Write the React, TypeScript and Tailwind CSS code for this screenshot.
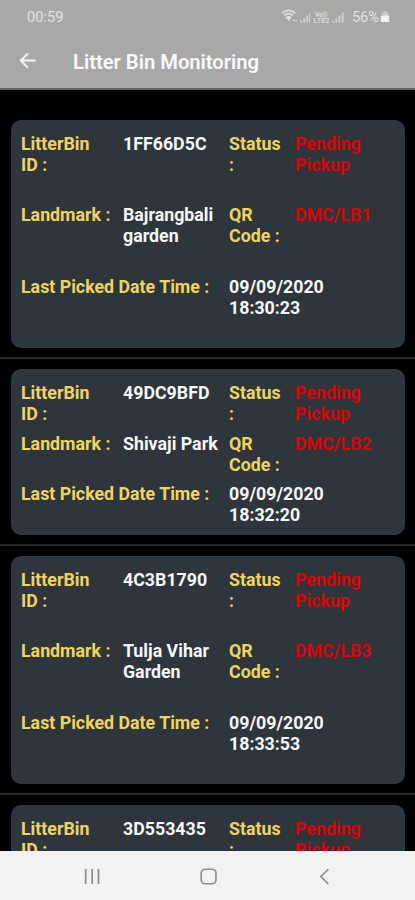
import type { ReactNode } from "react";
import { clsx } from "clsx";

type Bin = {
  id: string;
  status: string;
  tall: boolean;
  details?: {
    landmark: string;
    qrCode: string;
    pickedAt: string;
  };
};

const bins: Bin[] = [
  {
    id: "1FF66D5C",
    status: "Pending Pickup",
    tall: true,
    details: {
      landmark: "Bajrangbali garden",
      qrCode: "DMC/LB1",
      pickedAt: "09/09/2020 18:30:23",
    },
  },
  {
    id: "49DC9BFD",
    status: "Pending Pickup",
    tall: false,
    details: {
      landmark: "Shivaji Park",
      qrCode: "DMC/LB2",
      pickedAt: "09/09/2020 18:32:20",
    },
  },
  {
    id: "4C3B1790",
    status: "Pending Pickup",
    tall: true,
    details: {
      landmark: "Tulja Vihar Garden",
      qrCode: "DMC/LB3",
      pickedAt: "09/09/2020 18:33:53",
    },
  },
  {
    id: "3D553435",
    status: "Pending Pickup",
    tall: true,
  },
];

export default function App() {
  return (
    <div className="flex h-[900px] w-[415px] flex-col overflow-hidden bg-black font-['Roboto',sans-serif]">
      <header className="h-[90px] shrink-0 border-b-2 border-[#666] bg-[#a8a8a8]">
        <StatusBar />
        <div className="flex h-[54px] items-center pl-[18px]">
          <BackArrow />
          <h1 className="ml-[35px] pt-px text-[20.2px] leading-6 font-semibold text-[#fafafa]">
            Litter Bin Monitoring
          </h1>
        </div>
      </header>

      <main className="flex-1 overflow-hidden pt-[29.5px]">
        {bins.map((bin) => (
          <div
            key={bin.id}
            className="mb-[10px] border-b-2 border-[#262626] px-[10.5px] pb-[8.5px]"
          >
            <BinCard bin={bin} />
          </div>
        ))}
      </main>

      <NavigationBar />
    </div>
  );
}

function BinCard({ bin }: { bin: Bin }) {
  const row = clsx("flex", bin.tall ? "h-[71.4px]" : "h-[50.7px]");

  return (
    <section
      className={clsx(
        "rounded-[10px] bg-[#2e353b] pt-[13.6px] pl-[10.5px] text-[17.8px] leading-[21px] font-bold text-[#f5f7f8]",
        bin.tall ? "h-[228.5px]" : "h-[166.5px]"
      )}
    >
      <div className={row}>
        <Label className="w-[102px] pr-5">LitterBin ID :</Label>
        <div className="w-[106px]">{bin.id}</div>
        <Label className="w-[66px] pr-3">Status :</Label>
        <div className="w-[90px] text-[#d80508]">{bin.status}</div>
      </div>
      {bin.details && (
        <>
          <div className={row}>
            <Label className="w-[102px]">Landmark :</Label>
            <div className="w-[106px] pr-1">{bin.details.landmark}</div>
            <Label className="w-[66px] pr-3">QR Code :</Label>
            <div className="w-[90px] text-[#d80508]">{bin.details.qrCode}</div>
          </div>
          <div className={row}>
            <Label className="w-[208px]">Last Picked Date Time :</Label>
            <div className="w-[110px]">{bin.details.pickedAt}</div>
          </div>
        </>
      )}
    </section>
  );
}

function Label({
  children,
  className = "",
}: {
  children: ReactNode;
  className?: string;
}) {
  return (
    <div className={clsx("shrink-0 text-[#eed55f]", className)}>{children}</div>
  );
}

function StatusBar() {
  return (
    <div className="flex h-[34px] items-center justify-between pr-[25px] pl-[27px] text-[14.6px] text-[#e2e2e2]">
      <span className="pt-px">00:59</span>
      <div className="flex items-center">
        {/* Wifi, both SIM signals and the VoLTE badge */}
        <svg width="66" height="16" viewBox="0 0 66 16" fill="none">
          <path
            d="M0 4C4.1.6 9.1.6 13.2 4M2.3 6.4c2.6-2.2 6-2.2 8.6 0"
            stroke="#dedede"
            strokeWidth="1.7"
          />
          <path d="M3.5 8c2-1.5 4.4-1.5 6.4 0L6.7 12z" fill="#dedede" />
          <path d="m10 12 1.5-2 1.5 2zM13 11h2.5l-1.3 2z" fill="#d8d8d8" />
          <g fill="#d4d4d4">
            <path d="M18 11.5h2v2h-2zM21.2 9.5H23v4h-1.8zM24.3 6.5H26v7h-1.7zM27.1 4h1v9.5h-1z" />
            <path d="M50 11.5h2v2h-2zM53.3 9.5h1.8v4h-1.8zM56.5 6.5h2v7h-2zM59.8 3.5h1.8v10h-1.8z" />
          </g>
          <text x="33" y="7.5" fill="#dedede" fontSize="6.5" fontWeight="bold" textLength="12">
            Vo))
          </text>
          <text x="31.5" y="14" fill="#dedede" fontSize="7" fontWeight="bold" textLength="16">
            LTE2
          </text>
        </svg>
        <span className="ml-[4px] pt-px">56%</span>
        <svg className="ml-px" width="10" height="14" viewBox="0 0 10 14">
          <path d="M3.2 1h3.6v1.6h1.7V7h-7V2.6h1.7z" fill="#c4c4c4" />
          <path d="M.8 5.6h8.4v6.4H.8z" fill="#f1f1f1" />
        </svg>
      </div>
    </div>
  );
}

function BackArrow() {
  return (
    <svg width="20" height="20" viewBox="0 0 20 20" fill="none" aria-label="Back">
      <path
        d="M17.7 9.6H3.3M10 2.4 2.8 9.6l7.2 7.2"
        stroke="#f5f5f5"
        strokeWidth="2"
      />
    </svg>
  );
}

function NavigationBar() {
  return (
    <nav className="flex h-[49px] shrink-0 items-center bg-[#f2f2f2] text-[#8b8b8b]">
      <svg width="415" height="49" viewBox="0 0 415 49" fill="none" stroke="currentColor">
        <path d="M85.7 18v15M92.2 18v15M98.5 18v15" strokeWidth="1.7" />
        <rect x="201.2" y="18.2" width="14.8" height="14.6" rx="4" strokeWidth="1.6" />
        <path d="m328.3 18.2-7.5 7.4 7.5 7.4" strokeWidth="1.6" />
      </svg>
    </nav>
  );
}
